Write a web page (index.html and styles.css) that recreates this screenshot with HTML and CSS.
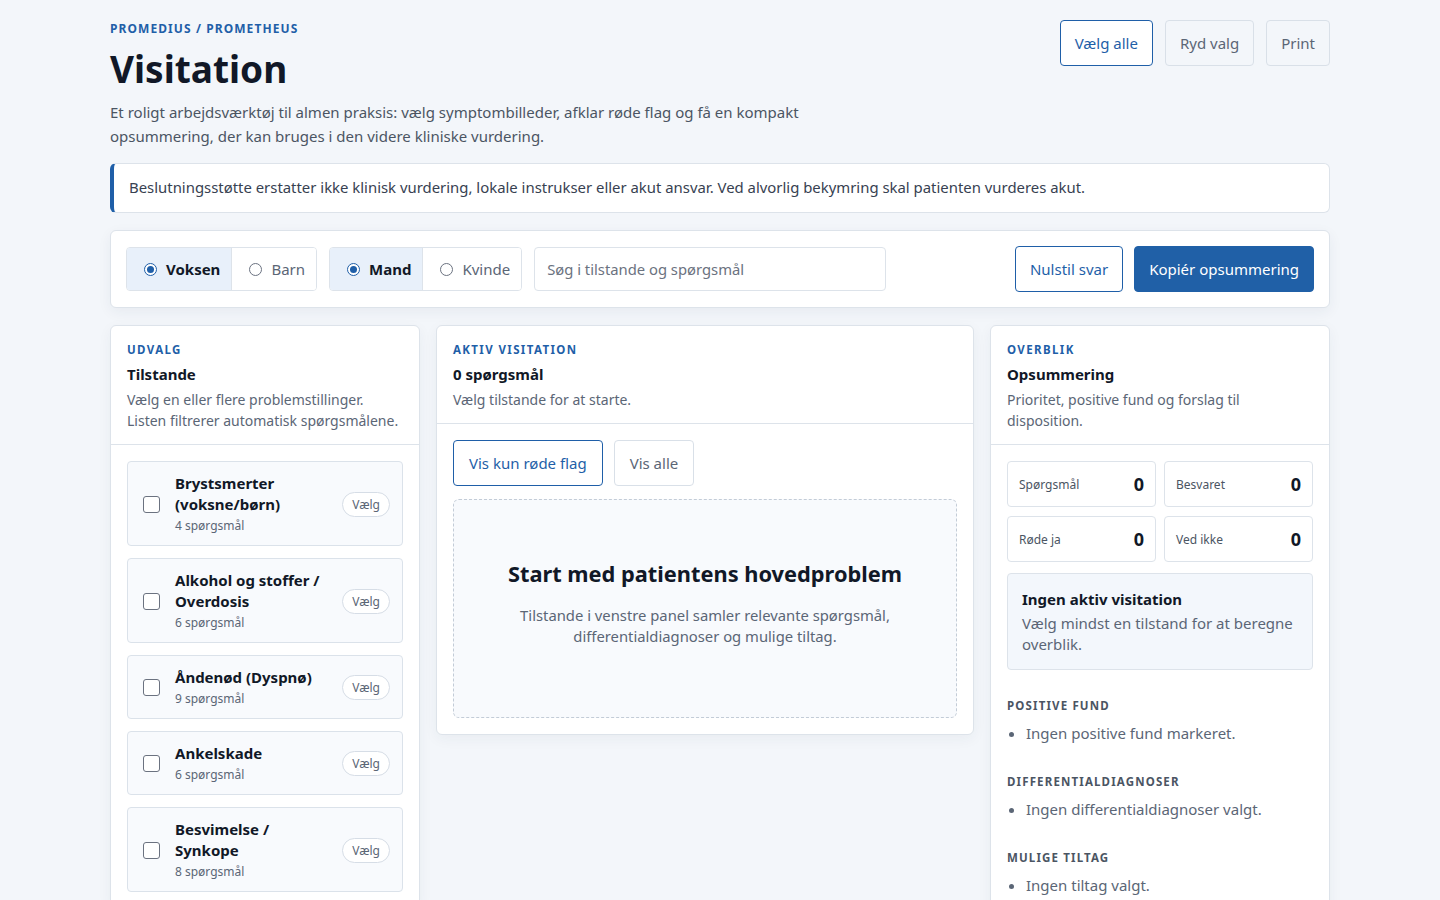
FILE: index.html
```html
<!DOCTYPE html>
<html lang="da">
<head>
    <meta charset="UTF-8">
    <meta name="viewport" content="width=device-width, initial-scale=1.0">
    <title>Visitation</title>
    <link rel="stylesheet" href="styles.css">
</head>
<body>
    <div class="page">
        <header class="top">
            <div class="intro">
                <div class="eyebrow">Promedius / Prometheus</div>
                <h1>Visitation</h1>
                <p class="lead">Et roligt arbejdsværktøj til almen praksis: vælg symptombilleder, afklar røde flag og få en kompakt opsummering, der kan bruges i den videre kliniske vurdering.</p>
            </div>
            <div class="top-actions">
                <button class="btn btn-outline">Vælg alle</button>
                <button class="btn btn-ghost">Ryd valg</button>
                <button class="btn btn-ghost">Print</button>
            </div>
        </header>

        <div class="notice">Beslutningsstøtte erstatter ikke klinisk vurdering, lokale instrukser eller akut ansvar. Ved alvorlig bekymring skal patienten vurderes akut.</div>

        <div class="toolbar">
            <div class="segment">
                <label class="seg-item active"><span class="radio checked"></span>Voksen</label>
                <label class="seg-item"><span class="radio"></span>Barn</label>
            </div>
            <div class="segment">
                <label class="seg-item active"><span class="radio checked"></span>Mand</label>
                <label class="seg-item"><span class="radio"></span>Kvinde</label>
            </div>
            <input class="search" type="text" placeholder="Søg i tilstande og spørgsmål">
            <div class="toolbar-actions">
                <button class="btn btn-outline">Nulstil svar</button>
                <button class="btn btn-primary">Kopiér opsummering</button>
            </div>
        </div>

        <main class="columns">
            <section class="card">
                <div class="card-head">
                    <div class="kicker">Udvalg</div>
                    <h2>Tilstande</h2>
                    <p>Vælg en eller flere problemstillinger. Listen filtrerer automatisk spørgsmålene.</p>
                </div>
                <div class="card-body condition-list">
                    <div class="condition">
                        <span class="checkbox"></span>
                        <div class="condition-text">
                            <div class="condition-name">Brystsmerter (voksne/børn)</div>
                            <div class="condition-count">4 spørgsmål</div>
                        </div>
                        <button class="pill">Vælg</button>
                    </div>
                    <div class="condition">
                        <span class="checkbox"></span>
                        <div class="condition-text">
                            <div class="condition-name">Alkohol og stoffer / Overdosis</div>
                            <div class="condition-count">6 spørgsmål</div>
                        </div>
                        <button class="pill">Vælg</button>
                    </div>
                    <div class="condition">
                        <span class="checkbox"></span>
                        <div class="condition-text">
                            <div class="condition-name">Åndenød (Dyspnø)</div>
                            <div class="condition-count">9 spørgsmål</div>
                        </div>
                        <button class="pill">Vælg</button>
                    </div>
                    <div class="condition">
                        <span class="checkbox"></span>
                        <div class="condition-text">
                            <div class="condition-name">Ankelskade</div>
                            <div class="condition-count">6 spørgsmål</div>
                        </div>
                        <button class="pill">Vælg</button>
                    </div>
                    <div class="condition">
                        <span class="checkbox"></span>
                        <div class="condition-text">
                            <div class="condition-name">Besvimelse / Synkope</div>
                            <div class="condition-count">8 spørgsmål</div>
                        </div>
                        <button class="pill">Vælg</button>
                    </div>
                </div>
            </section>

            <section class="card card-middle">
                <div class="card-head">
                    <div class="kicker">Aktiv visitation</div>
                    <h2>0 spørgsmål</h2>
                    <p>Vælg tilstande for at starte.</p>
                </div>
                <div class="card-body">
                    <div class="filter-row">
                        <button class="btn btn-outline">Vis kun røde flag</button>
                        <button class="btn btn-plain">Vis alle</button>
                    </div>
                    <div class="empty">
                        <h3>Start med patientens hovedproblem</h3>
                        <p>Tilstande i venstre panel samler relevante spørgsmål, differentialdiagnoser og mulige tiltag.</p>
                    </div>
                </div>
            </section>

            <section class="card">
                <div class="card-head">
                    <div class="kicker">Overblik</div>
                    <h2>Opsummering</h2>
                    <p>Prioritet, positive fund og forslag til disposition.</p>
                </div>
                <div class="card-body">
                    <div class="stats">
                        <div class="stat"><span>Spørgsmål</span><strong>0</strong></div>
                        <div class="stat"><span>Besvaret</span><strong>0</strong></div>
                        <div class="stat"><span>Røde ja</span><strong>0</strong></div>
                        <div class="stat"><span>Ved ikke</span><strong>0</strong></div>
                    </div>
                    <div class="info-box">
                        <h4>Ingen aktiv visitation</h4>
                        <p>Vælg mindst en tilstand for at beregne overblik.</p>
                    </div>
                    <div class="summary-section">
                        <h5>Positive fund</h5>
                        <ul><li>Ingen positive fund markeret.</li></ul>
                    </div>
                    <div class="summary-section">
                        <h5>Differentialdiagnoser</h5>
                        <ul><li>Ingen differentialdiagnoser valgt.</li></ul>
                    </div>
                    <div class="summary-section">
                        <h5>Mulige tiltag</h5>
                        <ul><li>Ingen tiltag valgt.</li></ul>
                    </div>
                </div>
            </section>
        </main>
    </div>
</body>
</html>
```

FILE: styles.css
```css
* {
    box-sizing: border-box;
}
body {
    margin: 0;
    font-family: "Noto Sans", "Open Sans", Arial, sans-serif;
    font-size: 15px;
    color: #111827;
    background-color: #f3f6fa;
}
.page {
    max-width: 1220px;
    margin: 0 auto;
    padding: 20px 0 40px;
}

/* header */
.top {
    display: flex;
    justify-content: space-between;
    align-items: flex-start;
}
.intro {
    padding-top: 1px;
}
.eyebrow {
    font-size: 12px;
    font-weight: 700;
    letter-spacing: 0.09em;
    text-transform: uppercase;
    color: #1f5fa8;
    line-height: 16px;
}
h1 {
    margin: 10px 0 9px;
    font-size: 37px;
    line-height: 44px;
    font-weight: 700;
    color: #111827;
}
.lead {
    margin: 0;
    max-width: 720px;
    font-size: 15px;
    line-height: 24px;
    color: #4b5563;
}
.top-actions {
    display: flex;
    gap: 12px;
}

/* buttons */
.btn {
    height: 46px;
    padding: 0 14px;
    font-family: inherit;
    font-size: 15px;
    border-radius: 4px;
    cursor: pointer;
    background-color: #fff;
    color: #1f5fa8;
    border: 1px solid #1f5fa8;
}
.btn-ghost {
    background-color: #f3f6fa;
    color: #5b6676;
    border-color: #d9e0e8;
}
.btn-plain {
    background-color: #fff;
    color: #5b6676;
    border-color: #d9e0e8;
}
.btn-primary {
    background-color: #2060a7;
    border-color: #2060a7;
    color: #fff;
}

/* disclaimer */
.notice {
    margin-top: 15px;
    padding: 13px 16px 14px 15px;
    background-color: #fff;
    border: 1px solid #dde3ea;
    border-left: 4px solid #1f5fa8;
    border-radius: 6px;
    font-size: 14.9px;
    line-height: 21px;
    color: #374151;
}

/* toolbar */
.toolbar {
    margin-top: 17px;
    display: flex;
    align-items: center;
    gap: 12px;
    padding: 15px;
    background-color: #fff;
    border: 1px solid #dde3ea;
    border-radius: 6px;
    box-shadow: 0 4px 14px rgba(30, 50, 80, 0.06);
}
.segment {
    display: flex;
    height: 44px;
    border: 1px solid #dde3ea;
    border-radius: 4px;
    overflow: hidden;
}
.seg-item {
    display: flex;
    align-items: center;
    gap: 9px;
    padding: 0 11px 0 17px;
    font-size: 15px;
    color: #5b6676;
    background-color: #fff;
}
.seg-item + .seg-item {
    border-left: 1px solid #dde3ea;
}
.seg-item.active {
    background-color: #e8f0fa;
    color: #111827;
    font-weight: 700;
}
.radio {
    width: 13px;
    height: 13px;
    border: 1px solid #6b7280;
    border-radius: 50%;
    position: relative;
    background-color: #fff;
}
.radio.checked {
    border-color: #1f5fa8;
}
.radio.checked::after {
    content: "";
    position: absolute;
    top: 2px;
    left: 2px;
    width: 7px;
    height: 7px;
    border-radius: 50%;
    background-color: #1f5fa8;
}
.search {
    width: 352px;
    height: 44px;
    padding: 0 12px;
    font-family: inherit;
    font-size: 14.8px;
    border: 1px solid #dde3ea;
    border-radius: 4px;
    color: #111827;
}
.search::placeholder {
    color: #6b7280;
}
.toolbar-actions {
    margin-left: auto;
    display: flex;
    gap: 11px;
}

/* columns */
.columns {
    margin-top: 17px;
    display: grid;
    grid-template-columns: 310px 1fr 340px;
    gap: 16px;
    align-items: start;
}
.card {
    background-color: #fff;
    border: 1px solid #dde3ea;
    border-radius: 6px;
    box-shadow: 0 4px 14px rgba(30, 50, 80, 0.05);
}
.card-head {
    padding: 16px 16px 13px;
    border-bottom: 1px solid #dde3ea;
}
.kicker {
    font-size: 11.5px;
    font-weight: 700;
    letter-spacing: 0.12em;
    text-transform: uppercase;
    color: #1f5fa8;
    line-height: 16px;
}
.card-head h2 {
    margin: 5px 0 4px;
    font-size: 15px;
    line-height: 22px;
    font-weight: 700;
}
.card-head p {
    margin: 0;
    font-size: 14px;
    line-height: 21px;
    color: #5b6676;
}
.card-body {
    padding: 16px;
}

/* condition list */
.condition-list {
    display: flex;
    flex-direction: column;
    gap: 12px;
}
.condition {
    display: flex;
    align-items: center;
    padding: 11px 12px 10px 15px;
    background-color: #f8fafd;
    border: 1px solid #dbe2ea;
    border-radius: 4px;
}
.checkbox {
    flex: none;
    width: 17px;
    height: 17px;
    border: 1.5px solid #6b7280;
    border-radius: 3px;
    background-color: #fff;
    margin-right: 15px;
}
.condition-text {
    flex: 1;
    padding-right: 18px;
}
.condition-name {
    font-size: 15px;
    line-height: 21px;
    font-weight: 700;
    color: #111827;
}
.condition-count {
    margin-top: 2px;
    font-size: 12px;
    line-height: 18px;
    color: #5b6676;
}
.pill {
    flex: none;
    height: 25px;
    padding: 0 9px;
    font-family: inherit;
    font-size: 12px;
    color: #5b6676;
    background-color: #fff;
    border: 1px solid #d6dde6;
    border-radius: 13px;
}

/* active visitation */
.filter-row {
    display: flex;
    gap: 11px;
}
.filter-row .btn {
    padding: 0 15px;
}
.empty {
    margin-top: 13px;
    height: 219px;
    display: flex;
    flex-direction: column;
    align-items: center;
    justify-content: center;
    text-align: center;
    background-color: #f8fafd;
    border: 1px dashed #c3ccd7;
    border-radius: 6px;
    padding: 0 40px 12px;
}
.empty h3 {
    margin: 0 0 16px;
    font-size: 21.8px;
    line-height: 30px;
    font-weight: 700;
}
.empty p {
    margin: 0;
    max-width: 400px;
    font-size: 14.8px;
    line-height: 21px;
    color: #5b6676;
}

/* overview */
.stats {
    display: grid;
    grid-template-columns: 1fr 1fr;
    gap: 9px 8px;
}
.stat {
    height: 46px;
    display: flex;
    align-items: center;
    justify-content: space-between;
    padding: 0 11px;
    border: 1px solid #dde3ea;
    border-radius: 4px;
}
.stat span {
    font-size: 12px;
    color: #4b5563;
}
.stat strong {
    font-size: 18px;
    font-weight: 700;
}
.info-box {
    margin-top: 11px;
    padding: 13px 14px 14px;
    background-color: #f3f7fc;
    border: 1px solid #dde3ea;
    border-radius: 4px;
}
.info-box h4 {
    margin: 0 0 2px;
    font-size: 15px;
    line-height: 24px;
    font-weight: 700;
}
.info-box p {
    margin: 0;
    font-size: 15px;
    line-height: 21px;
    color: #5b6676;
}
.summary-section {
    margin-top: 28px;
}
.summary-section + .summary-section {
    margin-top: 30px;
}
.summary-section h5 {
    margin: 0;
    font-size: 11.5px;
    line-height: 16px;
    font-weight: 700;
    letter-spacing: 0.1em;
    text-transform: uppercase;
    color: #4b5563;
}
.summary-section ul {
    margin: 9px 0 0;
    padding-left: 19px;
}
.summary-section li {
    font-size: 15px;
    line-height: 21px;
    color: #5b6676;
}
```
